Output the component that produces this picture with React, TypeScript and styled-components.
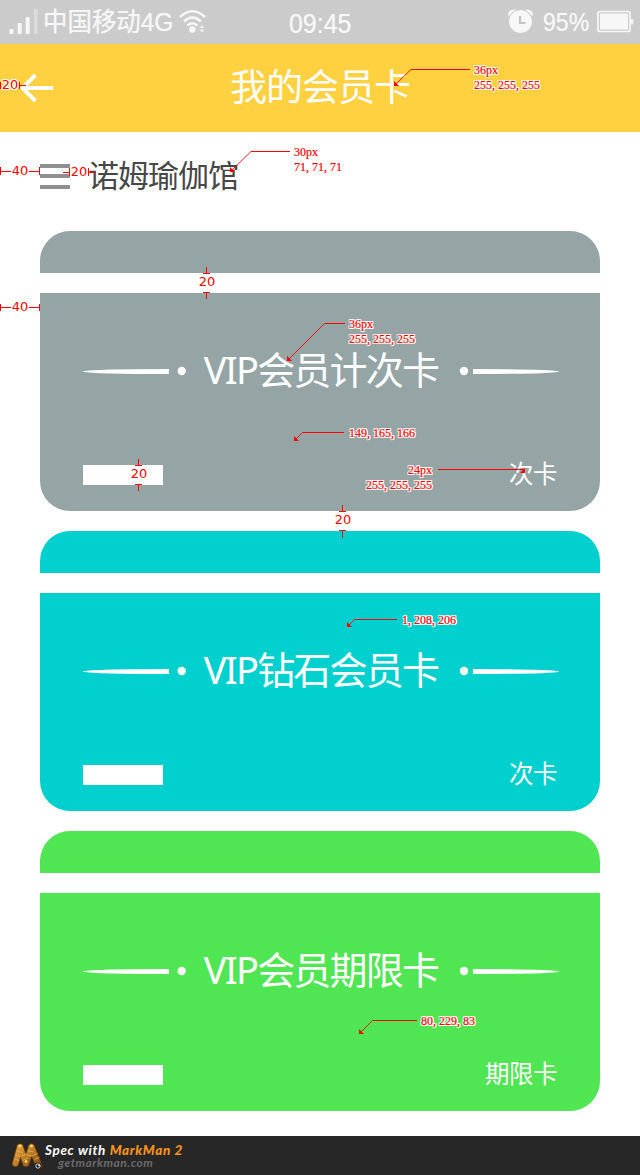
import React from "react";
import styled, { createGlobalStyle } from "styled-components";

const GlobalStyle = createGlobalStyle`
  *, *::before, *::after { box-sizing: border-box; }
  body {
    margin: 0;
    background: #fff;
    font-family: "Noto Sans", "Noto Sans CJK SC", sans-serif;
  }
`;

const Page = styled.div`
  position: relative;
  width: 640px;
  height: 1175px;
  display: flex;
  flex-direction: column;
  background: #fff;
  overflow: hidden;
`;

const StatusBar = styled.div`
  display: grid;
  grid-template-columns: 1fr auto 1fr;
  align-items: center;
  height: 44px;
  padding: 0 5px 0 9px;
  background: #cbcbcb;
  color: #f7f7f7;
`;

const StatusGroup = styled.div<{ $end?: boolean }>`
  display: flex;
  align-items: center;
  justify-content: ${(p) => (p.$end ? "flex-end" : "flex-start")};
  height: 44px;
`;

const StatusText = styled.span<{ $size: number; $width: number; $squeeze: number; $line: number; $start?: number }>`
  display: block;
  width: ${(p) => p.$width}px;
  height: 44px;
  margin-left: ${(p) => p.$start ?? 0}px;
  line-height: ${(p) => p.$line}px;
  font-family: "Liberation Sans", "Noto Sans CJK SC", sans-serif;
  font-size: ${(p) => p.$size}px;
  white-space: nowrap;
  text-shadow: 0 0 1px rgba(255, 255, 255, 0.6);
  transform: scaleX(${(p) => p.$squeeze});
  transform-origin: left center;
`;

const Header = styled.header`
  display: grid;
  grid-template-columns: 60px 1fr 60px;
  align-items: center;
  height: 88px;
  padding: 0 20px;
  background: #ffd03f;
  color: #fff;
`;

const HeaderTitle = styled.h1`
  margin: 0;
  height: 88px;
  text-align: center;
  font-size: 37px;
  font-weight: 400;
  letter-spacing: -1px;
  line-height: 86px;
`;

const VenueRow = styled.div`
  display: flex;
  align-items: center;
  gap: 18px;
  height: 99px;
  padding: 0 40px 11px;
`;

const MenuBars = styled.div`
  display: grid;
  grid-template-rows: repeat(3, 4px);
  row-gap: 6.5px;
  width: 30px;
  & > i { background: #909090; }
`;

const VenueName = styled.span`
  height: 40px;
  font-size: 31px;
  font-weight: 400;
  letter-spacing: -1px;
  line-height: 38px;
  color: #474747;
`;

const CardList = styled.main`
  display: flex;
  flex-direction: column;
  gap: 20px;
  padding: 0 40px;
`;

const Card = styled.section<{ $color: string }>`
  display: flex;
  flex-direction: column;
  gap: 20px;
  height: 280px;
  color: #fff;
  & > * { background: ${(p) => p.$color}; }
`;

const CardTop = styled.div`
  height: 42px;
  border-radius: 30px 30px 0 0;
`;

const CardBody = styled.div`
  display: flex;
  flex-direction: column;
  justify-content: space-between;
  height: 218px;
  padding: 52px 41px 17px 43px;
  border-radius: 0 0 30px 30px;
`;

const CardHeading = styled.div`
  display: flex;
  align-items: center;
  justify-content: space-between;
  height: 52px;
`;

const CardName = styled.h2`
  margin: 0;
  height: 52px;
  font-size: 38px;
  font-weight: 400;
  letter-spacing: -1.8px;
  line-height: 48px;
  white-space: nowrap;
`;

const CardFooter = styled.div`
  display: flex;
  align-items: center;
  justify-content: space-between;
  height: 38px;
`;

const Blank = styled.span`
  width: 80px;
  height: 20px;
  margin-bottom: 1px;
  background: #fff;
`;

const Kind = styled.span`
  height: 38px;
  padding-right: 2px;
  font-size: 24.5px;
  font-weight: 400;
  letter-spacing: -0.5px;
  line-height: 36px;
`;

const Footer = styled.footer`
  display: flex;
  align-items: center;
  gap: 1px;
  height: 39px;
  margin-top: auto;
  padding-left: 11px;
  background: #272727;
`;

const FooterText = styled.div`
  display: flex;
  flex-direction: column;
  font-family: Lato, sans-serif;
  font-style: italic;
  white-space: nowrap;
`;

const FooterBrand = styled.span`
  font-size: 13.5px;
  font-weight: 700;
  line-height: 14px;
  letter-spacing: 0.65px;
  color: #fff;
  & > b { color: #f7931e; }
`;

const FooterSite = styled.span`
  padding-left: 13px;
  font-size: 12px;
  font-weight: 700;
  line-height: 11px;
  letter-spacing: 0.5px;
  color: #6b6b6b;
`;

const MarkLayer = styled.div`
  position: absolute;
  inset: 0;
  pointer-events: none;
  & > svg { display: block; }
`;

const halo = `
  text-shadow: 1px 0 #fff, -1px 0 #fff, 0 1px #fff, 0 -1px #fff,
    1px 1px #fff, -1px 1px #fff, 1px -1px #fff, -1px -1px #fff;
`;

const NoteText = styled.div<{ $x: number; $y: number; $end?: boolean }>`
  position: absolute;
  top: ${(p) => p.$y}px;
  ${(p) => (p.$end ? `right: ${640 - p.$x}px; text-align: right;` : `left: ${p.$x}px;`)}
  font: 12px/15px "Liberation Serif", serif;
  color: #f00;
  white-space: pre-line;
  -webkit-text-stroke: 0.2px #f00;
  ${halo}
`;

const SizeText = styled.div<{ $x: number; $y: number }>`
  position: absolute;
  left: ${(p) => p.$x}px;
  top: ${(p) => p.$y}px;
  width: 20px;
  text-align: center;
  font: 13px/14px "DejaVu Sans", sans-serif;
  color: #f00;
  ${halo}
`;

const Signal = () => (
  <svg width="30" height="44" viewBox="9 0 30 44">
    <g fill="#f7f7f7">
      <rect x="9.5" y="29" width="4" height="5" rx="1" />
      <rect x="17.7" y="23" width="4" height="11" rx="1" />
      <rect x="25.7" y="17" width="4" height="17" rx="1" />
      <rect x="34" y="9" width="3.5" height="25" rx="1" opacity=".4" />
    </g>
  </svg>
);

const Wifi = () => (
  <svg width="30" height="44" viewBox="178 0 30 44" fill="none" stroke="#f7f7f7" strokeWidth="2.600">
    <path d="M180 17Q192.500 5.500 205 17M184 21.500Q192.500 13.500 201 21.500M187.500 25.500Q192.500 21 197.500 25.500" />
    <circle cx="192.300" cy="29.500" r="3.200" fill="#f7f7f7" stroke="none" />
    <path d="M199.500 28l2.500-3 2.500 3zM199.500 29.500l2.500 3 2.500-3z" fill="#f7f7f7" stroke="none" opacity=".8" />
  </svg>
);

const Alarm = () => (
  <svg width="27" height="44" viewBox="507 0 27 44">
    <path d="M508.500 16.500Q507 9 516 9.500ZM532.500 16.500Q534 9 525 9.500Z" fill="#f7f7f7" />
    <circle cx="520.500" cy="21.500" r="12" fill="#f7f7f7" stroke="#cbcbcb" strokeWidth="1" />
    <path d="M520 16v7h5.500" fill="none" stroke="#c4c4c4" strokeWidth="2.200" />
  </svg>
);

const Battery = () => (
  <svg width="38" height="44" viewBox="597 0 38 44">
    <rect x="598" y="11.500" width="32" height="20" rx="2" fill="none" stroke="#f7f7f7" strokeWidth="1.700" />
    <rect x="600" y="13.500" width="28" height="16" fill="#f7f7f7" />
    <rect x="631" y="19" width="2.200" height="5.500" rx="1" fill="#f7f7f7" />
  </svg>
);

const BackArrow = () => (
  <svg width="34" height="30" viewBox="20 73 34 30" fill="none" stroke="#fff" strokeWidth="4">
    <path d="M53 88H23M35.500 75L22.500 88l13 13" />
  </svg>
);

const Flourish = ({ flip }: { flip?: boolean }) => (
  <svg width="104" height="10" viewBox="0 0 104 10" fill="#fff">
    <g transform={flip ? "translate(104 0) scale(-1 1)" : undefined}>
      <path d="M0 5.300Q12 3 86 3V8Q12 8 0 5.700Z" />
      <circle cx={flip ? 95 : 98.7} cy="5" r="4.200" />
    </g>
  </svg>
);

const Worm = () => (
  <svg width="33" height="33" viewBox="0 0 33 33">
    <defs>
      <linearGradient id="worm" x1="0" y1="0" x2="1" y2="1">
        <stop offset="0" stopColor="#e8a33c" />
        <stop offset="1" stopColor="#8a4d0b" />
      </linearGradient>
    </defs>
    <g fill="none" strokeLinecap="round">
      <path d="M4.500 24.500L9 8M9 8L15 24.500M15 24.500L20.500 8M20.500 8L28 27" stroke="#784008" strokeWidth="7" />
      <path d="M4.500 24.500L9 8M9 8L15 24.500M15 24.500L20.500 8M20.500 8L28 27" stroke="url(#worm)" strokeWidth="5.500" />
      <path d="M6 12l5 1.500M5 16l4 1.500M4 20l4 1.500M11 17l4-2M12.500 21l4-2M17.500 12l5 1M16 16l5 1M22 16.500l4-2M24 20.500l4-2" stroke="#e6b465" strokeWidth=".8" />
    </g>
    <g fill="#ffdf88">
      <circle cx="9" cy="7" r="1.300" />
      <circle cx="20.500" cy="7" r="1.300" />
      <circle cx="15" cy="22.500" r="1.300" />
    </g>
    <circle cx="27" cy="27" r="3.600" fill="#151515" />
    <circle cx="27" cy="27" r="2.200" fill="none" stroke="#fff" strokeWidth=".9" />
    <circle cx="28" cy="26.300" r=".9" fill="#fff" />
  </svg>
);

const cards = [
  { name: "VIP会员计次卡", kind: "次卡", color: "#95a5a6" },
  { name: "VIP钻石会员卡", kind: "次卡", color: "#01d0ce" },
  { name: "VIP会员期限卡", kind: "期限卡", color: "#50e553" },
];

const notes = [
  { x: 474, y: 63, text: "36px\n255, 255, 255" },
  { x: 294, y: 145, text: "30px\n71, 71, 71" },
  { x: 349, y: 317, text: "36px\n255, 255, 255" },
  { x: 349, y: 426, text: "149, 165, 166" },
  { x: 432, y: 463, text: "24px\n255, 255, 255", end: true },
  { x: 402, y: 613, text: "1, 208, 206" },
  { x: 421, y: 1014, text: "80, 229, 83" },
];

const sizes = [
  { x: 0, y: 78, value: 20 },
  { x: 10, y: 164, value: 40 },
  { x: 69, y: 165, value: 20 },
  { x: 10, y: 300, value: 40 },
  { x: 197, y: 275, value: 20 },
  { x: 129, y: 467, value: 20 },
  { x: 333, y: 513, value: 20 },
];

/* Each leader runs from its label to a bend and then down to the tip. */
const leaders = [
  { from: 470, bend: 411, y: 69.5, tip: [394, 86] },
  { from: 290, bend: 251, y: 151.5, tip: [230, 172] },
  { from: 345, bend: 324.5, y: 323.5, tip: [287, 361] },
  { from: 344, bend: 302.5, y: 432.5, tip: [294, 441] },
  { from: 397, bend: 354.5, y: 619.5, tip: [347, 627] },
  { from: 417, bend: 372.5, y: 1020.5, tip: [359, 1034] },
];

const Marks = () => (
  <MarkLayer>
    <svg width="640" height="1175" fill="none" stroke="#f00" strokeWidth="1">
      <path d="M.5 82v7M19.500 82v7M20 85.500h6" />
      <path d="M.5 167v8M1 171.500h11M28 171.500h11M39.500 167v8" />
      <path d="M63 172.500h6M69.500 168v8M88.500 168v8M89 172.500h7" />
      <path d="M.5 304v7M1 307.500h11M28 307.500h11M39.500 304v7" />
      <path d="M206.500 267v6M203 273.500h7M203 292.500h7M206.500 293v6" />
      <path d="M138.500 459v6M135 465.500h7M135 484.500h7M138.500 485v6" />
      <path d="M342.500 505v6M339 511.500h7M339 530.500h7M342.500 531v7" />
      {leaders.map(({ from, bend, y, tip: [tx, ty] }) => (
        <g key={y}>
          <path d={`M${from} ${y}H${bend}`} />
          <path d={`M${bend} ${y}L${tx + 1} ${ty - 1}`} strokeWidth=".9" />
          <path d={`M${tx} ${ty - 5}V${ty}H${tx + 5}Z`} fill="#f00" stroke="none" />
        </g>
      ))}
      <path d="M438 469.500H525" />
      <path d="M525 468v5h-5z" fill="#f00" stroke="none" />
    </svg>
    {notes.map((n) => (
      <NoteText key={n.y} $x={n.x} $y={n.y} $end={n.end}>{n.text}</NoteText>
    ))}
    {sizes.map((s) => (
      <SizeText key={s.y} $x={s.x} $y={s.y}>{s.value}</SizeText>
    ))}
  </MarkLayer>
);

export default function App() {
  return (
    <>
      <GlobalStyle />
      <Page>
        <StatusBar>
          <StatusGroup>
            <Signal />
            <StatusText $size={26} $width={135} $squeeze={0.94} $line={45} $start={4}>中国移动4G</StatusText>
            <Wifi />
          </StatusGroup>
          <StatusText $size={28} $width={66} $squeeze={0.89} $line={48}>09:45</StatusText>
          <StatusGroup $end>
            <Alarm />
            <StatusText $size={26} $width={54} $squeeze={0.89} $line={44} $start={9}>95%</StatusText>
            <Battery />
          </StatusGroup>
        </StatusBar>
        <Header>
          <BackArrow />
          <HeaderTitle>我的会员卡</HeaderTitle>
        </Header>
        <VenueRow>
          <MenuBars><i /><i /><i /></MenuBars>
          <VenueName>诺姆瑜伽馆</VenueName>
        </VenueRow>
        <CardList>
          {cards.map((c) => (
            <Card key={c.name} $color={c.color}>
              <CardTop />
              <CardBody>
                <CardHeading>
                  <Flourish />
                  <CardName>{c.name}</CardName>
                  <Flourish flip />
                </CardHeading>
                <CardFooter>
                  <Blank />
                  <Kind>{c.kind}</Kind>
                </CardFooter>
              </CardBody>
            </Card>
          ))}
        </CardList>
        <Footer>
          <Worm />
          <FooterText>
            <FooterBrand>Spec with <b>MarkMan 2</b></FooterBrand>
            <FooterSite>getmarkman.com</FooterSite>
          </FooterText>
        </Footer>
        <Marks />
      </Page>
    </>
  );
}
